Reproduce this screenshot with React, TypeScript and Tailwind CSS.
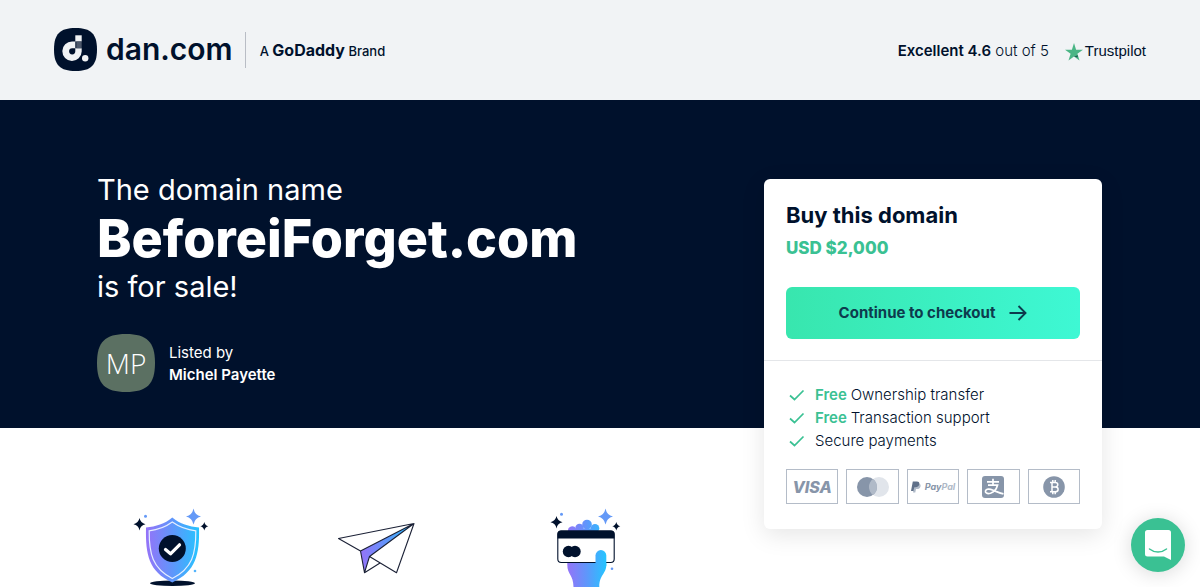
import type { ReactNode } from "react";

interface Benefit {
  id: number;
  highlight?: string;
  text: string;
}

interface PaymentMethod {
  name: string;
  logo: ReactNode;
}

const BENEFITS: Benefit[] = [
  { id: 1, highlight: "Free", text: "Ownership transfer" },
  { id: 2, highlight: "Free", text: "Transaction support" },
  { id: 3, text: "Secure payments" },
];

const Logo = () => (
  <svg viewBox="0 0 43 43" className="size-[43px]" aria-hidden="true">
    <path
      d="M21.5 0C37 0 43 6 43 21.5S37 43 21.5 43 0 37 0 21.5 6 0 21.5 0Z"
      fill="#00112c"
    />
    <path
      fillRule="evenodd"
      d="M21.300 13.500v6.700h6.400v3.300a9.700 9.700 0 1 1-9.700-10ZM18.200 20.200a3.100 3.100 0 1 0 3.100 3.100V20.200Z"
      fill="#f1f3f5"
    />
    <path d="M21.300 7.300h6.400v6.200h-6.400Z" fill="#f1f3f5" />
    <path d="M22.300 13.500h5.400v6.700h-5.400Z" fill="#4d586b" />
    <circle cx="31.200" cy="30.200" r="3.200" fill="#f1f3f5" />
  </svg>
);

const TrustStar = () => (
  <svg viewBox="0 0 18 18" className="size-[18px]" aria-hidden="true">
    <path
      d="M9 0l2.100 6.700H18l-5.600 4.100L14.500 17.500 9 13.400 3.500 17.500 5.600 10.800 0 6.700h6.900Z"
      fill="#4bb585"
    />
    <path d="M12.900 12.300 9 13.400l3.500 1Z" fill="#1d5c52" />
  </svg>
);

const Check = () => (
  <svg viewBox="0 0 16 12" className="h-3 w-4 shrink-0" fill="none" aria-hidden="true">
    <path d="M1 6.500 5.500 10.500 14.500 1.500" stroke="#3ac193" strokeWidth="1.700" />
  </svg>
);

const Arrow = () => (
  <svg viewBox="0 0 18 16" className="h-4 w-[18px]" fill="none" aria-hidden="true">
    <path d="M.5 8h16M9.500 1l7 7-7 7" stroke="#0d3b4d" strokeWidth="1.900" />
  </svg>
);

const PAYMENTS: PaymentMethod[] = [
  {
    name: "Visa",
    logo: <span className="text-base font-extrabold italic text-[#8795a9]">VISA</span>,
  },
  {
    name: "Mastercard",
    logo: (
      <svg viewBox="0 0 34 22" className="h-[22px] w-[34px]">
        <circle cx="23" cy="11" r="10" fill="#e1e5eb" />
        <circle cx="11" cy="11" r="10" fill="#8795a9" />
        <path d="M17 3a10 10 0 0 1 0 16 10 10 0 0 1 0-16Z" fill="#b0bac8" />
      </svg>
    ),
  },
  {
    name: "PayPal",
    logo: (
      <>
        <svg viewBox="0 0 10 12" className="mr-1 h-3 w-[10px]">
          <path d="M3.500 2.500h4c2 0 2.400 1.500 2 3C9 7.500 7.700 8 6 8H5l-.7 3.500H2Z" fill="#b0bac8" />
          <path d="M1.800.5h4c2.200 0 2.800 1.300 2.400 3C7.700 5.500 6.400 6.200 4.500 6.200H3.300L2.500 10H0Z" fill="#5f7089" />
        </svg>
        <span className="text-[9px] font-bold italic text-[#8795a9]">
          Pay<span className="text-[#b0bac8]">Pal</span>
        </span>
      </>
    ),
  },
  {
    name: "Alipay",
    logo: (
      <svg viewBox="0 0 22 22" className="size-[22px]" fill="none">
        <rect width="22" height="22" rx="3" fill="#8795a9" />
        <path
          d="M5 5.800h12M11 2.800v6M6 9.200h9.500c-.8 3-3.200 6.800-7 8-3.500 1-5.500-.5-5-2.300.6-2 4-2.300 7-.9 3.500 1.500 6.500 3 11 3.800"
          stroke="#fff"
          strokeWidth="1.700"
        />
      </svg>
    ),
  },
  {
    name: "Bitcoin",
    logo: (
      <svg viewBox="0 0 22 22" className="size-[22px]" fill="none">
        <circle cx="11" cy="11" r="10.800" fill="#8795a9" />
        <path
          d="M7 6.500h5.200c3.400 0 3.400 4.200.2 4.400 3.700.1 3.500 4.900 0 4.900H7M9 6.500v9.300M9 11h3.500M9.800 4v2.500M12.200 4v2.500M9.800 15.800v2.400M12.200 15.800v2.400"
          stroke="#fff"
          strokeWidth="1.500"
        />
      </svg>
    ),
  },
];

const Gradient = ({ id }: { id: string }) => (
  <defs>
    <linearGradient id={id} x1="0" y1="0" x2="1" y2="0">
      <stop offset="0" stopColor="#9573f8" />
      <stop offset="0.500" stopColor="#5f96fb" />
      <stop offset="1" stopColor="#25c4ff" />
    </linearGradient>
  </defs>
);

// Stars shared by the shield and the card drawings
const Sparkles = ({ inset = 0 }: { inset?: number }) => (
  <>
    <g transform={`translate(${inset / 4} ${-inset / 2})`}>
      <path d="M19.500 18q1 5 6 6.200-5 1-6 6.200-1-5.200-6-6.200 5-1.200 6-6.200Z" fill="#00112c" />
    </g>
    <g transform={`translate(${-inset} 0)`}>
      <path d="M73.500 8.500q1.300 6.700 7.500 8-6.200 1.300-7.500 8-1.300-6.700-7.500-8 6.200-1.300 7.500-8Z" fill="#6499f7" />
      <path d="M84.300 22q.7 3.400 4 4.200-3.300.8-4 4.200-.7-3.400-4-4.200 3.300-.8 4-4.200Z" fill="#00112c" />
    </g>
    <circle cx="25.500" cy={16.3 - inset / 2} r="1.500" fill="#6499f7" />
  </>
);

const ShieldIcon = () => (
  <svg viewBox="0 0 100 87" className="h-[87px] w-[100px]" fill="none">
    <Gradient id="shield" />
    <ellipse cx="52.500" cy="83.300" rx="22.500" ry="2.800" fill="#00112c" />
    <path
      d="M52.300 17.500C60 24 69 26.500 79 27.500c.7 27-3 44-26.700 55C28.500 71.500 25.500 54.500 26 27.500c10-1 18.600-3.500 26.300-10Z"
      fill="url(#shield)"
    />
    <path
      d="M52.300 22C60 27.500 67 29.800 75.800 30.800c.2 23-3.500 37.500-23.500 47.700C32.500 68.300 29 53.800 29.200 30.800 38 29.800 44.800 27.500 52.300 22Z"
      stroke="#e5eeff"
      strokeWidth="1.200"
    />
    <circle cx="52.300" cy="48.500" r="13.500" fill="#00112c" />
    <path
      d="m45.500 49.500 5 4.300 9-9"
      stroke="#fff"
      strokeWidth="3.200"
      strokeLinecap="round"
      strokeLinejoin="round"
    />
    <circle cx="75" cy="71" r="1.300" fill="#54b4fc" />
    <Sparkles />
  </svg>
);

const PlaneIcon = () => (
  <svg viewBox="0 0 100 87" className="h-[87px] w-[100px]" fill="none">
    <Gradient id="plane" />
    <path d="M86 23.500 32.500 51l4 21.700 5-16.200Z" fill="url(#plane)" />
    <path
      d="M86 23.500 10.500 38.500l22 12.500ZM32.500 51l4 21.700 5-16.200L86 23.500 68.500 72.700l-27-16.200M36.500 72.700 52 63"
      stroke="#1b2136"
      strokeWidth="1.100"
      strokeLinejoin="round"
    />
  </svg>
);

const CardIcon = () => (
  <svg viewBox="0 0 100 87" className="h-[87px] w-[100px]" fill="none">
    <defs>
      <linearGradient id="hand" gradientUnits="userSpaceOnUse" x1="31" y1="0" x2="70" y2="0">
        <stop offset="0" stopColor="#9573f8" />
        <stop offset="0.500" stopColor="#5f96fb" />
        <stop offset="1" stopColor="#25c4ff" />
      </linearGradient>
    </defs>
    <g fill="url(#hand)">
      <path d="M32 33v-2a4.300 4.300 0 0 1 8-2.500h22v4.500Z" />
      <circle cx="43.500" cy="28" r="4.200" />
      <circle cx="51" cy="24.500" r="4.800" />
      <circle cx="59" cy="28.300" r="4.300" />
      <path d="M31.300 60H70.300v5c0 9-7 9.500-7 22H37.500c0-12-6.200-12.500-6.200-22Z" />
    </g>
    <rect x="21.800" y="31" width="56.400" height="31.500" rx="3.500" fill="#fff" stroke="#00112c" strokeWidth="1.100" />
    <path d="M21.500 38.500V34a3.500 3.500 0 0 1 3.500-3.500h50a3.500 3.500 0 0 1 3.500 3.500v4.500Z" fill="#00112c" />
    <circle cx="32.500" cy="51.500" r="5.700" fill="#00112c" />
    <circle cx="39" cy="51.500" r="5.700" fill="#00112c" />
    <path d="M59.500 64V55.500a5.400 5.400 0 0 1 10.800 0V66H59.500Z" fill="url(#hand)" />
    <circle cx="76" cy="68.800" r="1.300" fill="#6499f7" />
    <Sparkles inset={4} />
  </svg>
);

const Header = () => (
  <header className="flex items-center justify-between bg-[#f1f3f5] px-[54px] pt-7 pb-[29px]">
    <a href="#" className="flex items-center">
      <Logo />
      <span className="ml-[9px] text-[30px] leading-[43px] font-semibold">dan.com</span>
      <span className="ml-3 h-9 w-px bg-[#b9bdc5]" />
      <span className="ml-[14px] text-[13px] font-medium">
        A <strong className="text-base font-bold">GoDaddy</strong> Brand
      </span>
    </a>
    <a href="#" className="flex items-center pt-1 text-[15px]">
      <span className="font-light">
        <strong className="font-semibold">Excellent 4.6</strong> out of 5
      </span>
      <span className="ml-4 flex items-center gap-0.5">
        <TrustStar />
        <span className="font-['Liberation_Sans',sans-serif] text-[15px]">Trustpilot</span>
      </span>
    </a>
  </header>
);

const BuyCard = () => (
  <aside className="-mb-[137px] w-[338px] shrink-0 rounded-md bg-white text-[#00112c] shadow-[0_6px_24px_rgba(0,0,0,0.1)]">
    <div className="border-b border-[#e4e6e9] px-[22px] pt-5 pb-[21px]">
      <h2 className="text-[22px] leading-[33px] font-bold">Buy this domain</h2>
      <p className="text-[17px] leading-[33px] font-extrabold text-[#3ac193]">USD $2,000</p>
      <button
        type="button"
        className="mt-[22px] flex h-[52px] w-full items-center justify-center gap-[14px] rounded-md bg-linear-to-r from-[#38e6ae] to-[#3ef8d4] text-[15px] font-bold text-[#0d3b4d]"
      >
        Continue to checkout
        <Arrow />
      </button>
    </div>
    <div className="px-[22px] pt-[22px] pb-[25px]">
      <ul className="pl-[3px] text-[15px] leading-[23px] font-light">
        {BENEFITS.map((benefit) => (
          <li key={benefit.id} className="flex items-center gap-[10px]">
            <Check />
            <span>
              {benefit.highlight && (
                <strong className="font-semibold text-[#3ac193]">{benefit.highlight} </strong>
              )}
              {benefit.text}
            </span>
          </li>
        ))}
      </ul>
      <ul className="mt-[17px] grid grid-cols-5 gap-2">
        {PAYMENTS.map((payment) => (
          <li
            key={payment.name}
            title={payment.name}
            className="flex h-[35px] items-center justify-center border border-[#b4bcc8] leading-none"
          >
            {payment.logo}
          </li>
        ))}
      </ul>
    </div>
  </aside>
);

const Hero = () => (
  <section className="bg-[#00112c] pt-[79px] pr-[98px] pb-9 pl-[97px] text-white">
    <div className="flex items-start justify-between">
      <div>
        <h1 className="-mt-2 text-[29px] leading-[38px] font-normal">
          The domain name
          <strong className="block text-[52px] leading-[59px] font-extrabold">
            BeforeiForget.com
          </strong>
          is for sale!
        </h1>
        <div className="mt-7 flex items-center gap-[14px]">
          <div className="relative flex size-[58px] items-center justify-center">
            <svg viewBox="0 0 58 58" className="absolute inset-0" aria-hidden="true">
              <path
                d="M29 0C50 0 58 8 58 29S50 58 29 58 0 50 0 29 8 0 29 0Z"
                fill="#5b7062"
              />
            </svg>
            <span className="relative font-['Open_Sans',sans-serif] text-[28px] font-light">MP</span>
          </div>
          <p className="pt-0.5 text-[15px] leading-[22px]">
            Listed by
            <strong className="block font-semibold">Michel Payette</strong>
          </p>
        </div>
      </div>
      <BuyCard />
    </div>
  </section>
);

const App = () => {
  return (
    <div className="bg-white font-['Inter',sans-serif] text-[#00112c]">
      <Header />
      <main>
        <Hero />
        <section className="flex gap-[108px] px-[120px] pt-[72px]">
          <ShieldIcon />
          <PlaneIcon />
          <CardIcon />
        </section>
      </main>
      <button
        type="button"
        aria-label="Open chat"
        className="fixed right-[15px] bottom-[15px] flex size-[54px] items-center justify-center rounded-full bg-[#3ac193] shadow-[0_2px_20px_rgba(0,0,0,0.15)]"
      >
        <svg viewBox="0 0 26 30" className="h-[30px] w-[26px]" fill="none">
          <path d="M2.500 0h21A2.500 2.500 0 0 1 26 2.500V30l-7-3.500H2.500A2.500 2.500 0 0 1 0 24V2.500A2.500 2.500 0 0 1 2.500 0Z" fill="#fff" />
          <path d="M4.500 19c5 4 12 4 17 0" stroke="#3ac193" strokeWidth="1.500" strokeLinecap="round" />
        </svg>
      </button>
    </div>
  );
};

export default App;
